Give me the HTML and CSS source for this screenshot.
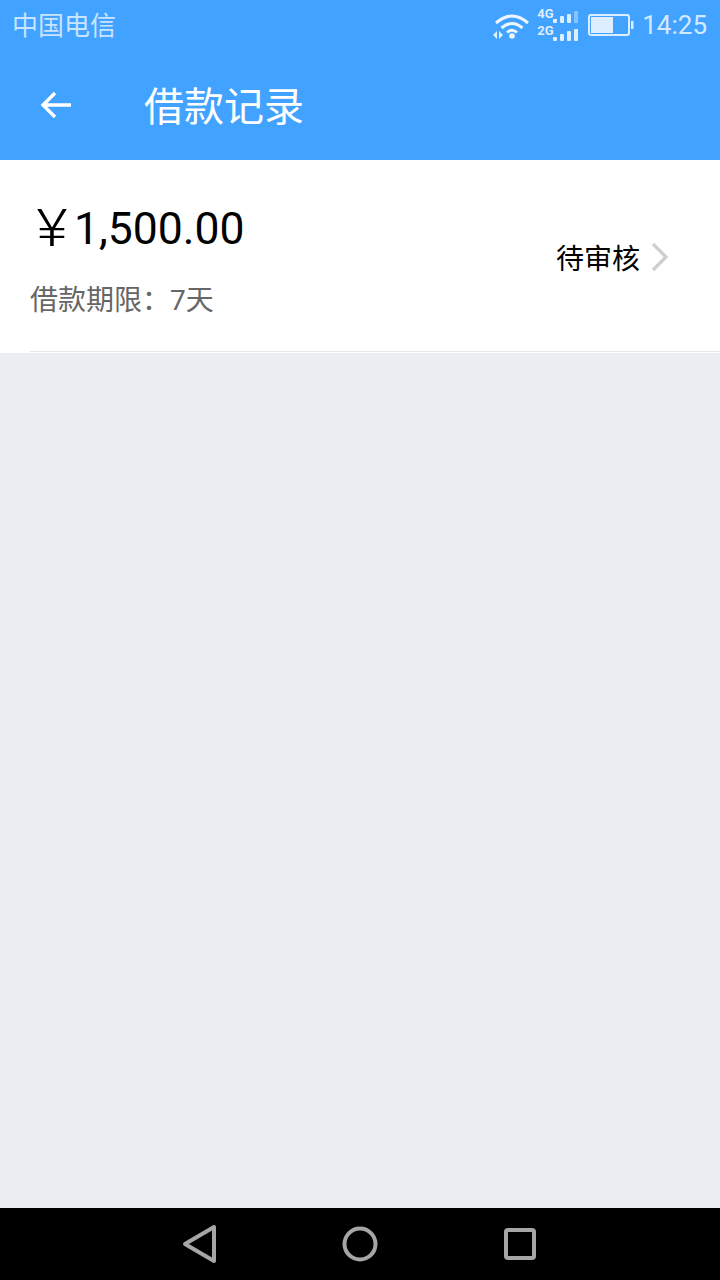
FILE: index.html
```html
<!DOCTYPE html>
<html lang="zh-CN">
<head>
  <meta charset="UTF-8">
  <title>借款记录</title>
  <link rel="stylesheet" href="styles.css">
</head>
<body>
<div class="box">
  <div class="head">
    <div class="statusBar">
      <span class="carrier">中国电信</span>
      <div class="statusRight">
        <svg class="wifi" width="38" height="28" viewBox="0 0 38 28">
          <path d="M3 12 Q19 -2 35 12" fill="none" stroke="#fff" stroke-width="3" opacity=".9"/>
          <path d="M8.500 17 Q19 8 29.500 17" fill="none" stroke="#fff" stroke-width="3" opacity=".9"/>
          <path d="M14 21.500 Q19 17 24 21.500" fill="none" stroke="#fff" stroke-width="2.800" opacity=".9"/>
          <circle cx="19" cy="25" r="2.800" fill="#fff" opacity=".9"/>
          <path d="M4 20 L0 24 L4 28 Z M6 20 L10 24 L6 28 Z" fill="#fff" opacity=".85"/>
        </svg>
        <div class="signal">
          <div class="signalRow">
            <span class="netType">4G</span>
            <svg width="25" height="12" viewBox="0 0 25 12">
              <rect x="0" y="8" width="4" height="4" rx="1" fill="#dceeff"/>
              <rect x="7" y="5" width="4" height="7" rx="1" fill="#dceeff"/>
              <rect x="14" y="3" width="4" height="9" rx="1" fill="#dceeff"/>
              <rect x="21" y="0" width="4" height="12" rx="1" fill="#dceeff" opacity=".45"/>
            </svg>
          </div>
          <div class="signalRow">
            <span class="netType netLow">2G</span>
            <svg width="25" height="12" viewBox="0 0 25 12">
              <rect x="0" y="8" width="4" height="4" rx="1" fill="#dceeff"/>
              <rect x="7" y="5" width="4" height="7" rx="1" fill="#dceeff"/>
              <rect x="14" y="2" width="4" height="10" rx="1" fill="#dceeff"/>
              <rect x="21" y="0" width="4" height="12" rx="1" fill="#dceeff"/>
            </svg>
          </div>
        </div>
        <svg class="battery" width="46" height="24" viewBox="0 0 46 24">
          <rect x="1" y="2" width="40" height="20" rx="2" fill="none" stroke="#dceeff" stroke-width="2"/>
          <rect x="3" y="4" width="22" height="16" fill="#dceeff"/>
          <rect x="43" y="8" width="2.500" height="8" fill="#dceeff"/>
        </svg>
        <span class="time">14:25</span>
      </div>
    </div>
    <div class="titleBar">
      <svg class="backIcon" width="36" height="36" viewBox="0 0 36 36">
        <path d="M33 18 H5 M17 6 L5 18 L17 30" fill="none" stroke="#fff" stroke-width="3.400"/>
      </svg>
      <h1>借款记录</h1>
    </div>
  </div>
  <div class="center">
    <div class="record">
      <div class="recordInfo">
        <p class="money"><span class="yen">¥</span>1,500.00</p>
        <p class="term">借款期限：7天</p>
      </div>
      <div class="recordState">
        <span>待审核</span>
        <svg width="18" height="30" viewBox="0 0 18 30">
          <path d="M2 2 L15 15 L2 28" fill="none" stroke="#cfcfcf" stroke-width="3.400"/>
        </svg>
      </div>
    </div>
  </div>
  <div class="navBar">
    <svg width="36" height="40" viewBox="0 0 36 40">
      <path d="M32 3 V37 L3 20 Z" fill="none" stroke="#a6a6a6" stroke-width="4" stroke-linejoin="round"/>
    </svg>
    <svg width="36" height="36" viewBox="0 0 36 36">
      <circle cx="18" cy="18" r="15.500" fill="none" stroke="#a6a6a6" stroke-width="4"/>
    </svg>
    <svg width="34" height="34" viewBox="0 0 34 34">
      <rect x="3" y="3" width="28" height="28" rx="2" fill="none" stroke="#a6a6a6" stroke-width="4"/>
    </svg>
  </div>
</div>
</body>
</html>
```
FILE: styles.css
```css
*{
  margin: 0;
  padding: 0;
  box-sizing: border-box;
}
html,body{
  width: 100%;
  height: 100%;
  background-color: #ecedf2;
  font-family: "Roboto", "Noto Sans CJK SC", sans-serif;
}
.box{
  width: 720px;
  height: 1280px;
  display: flex;
  flex-direction: column;
}
/*顶部*/
.head{
  height: 160px;
  background-color: #42a2ff;
}
.statusBar{
  height: 50px;
  display: flex;
  justify-content: space-between;
  align-items: center;
  padding: 0 13px 0 12px;
}
.carrier{
  font-size: 26px;
  color: #c9e4ff;
  margin-top: -4px;
}
.statusRight{
  display: flex;
  align-items: center;
}
.wifi{
  margin-right: 6px;
}
.signal{
  display: flex;
  flex-direction: column;
  gap: 4px;
  margin-right: 10px;
}
.signalRow{
  display: flex;
  align-items: flex-end;
  height: 14px;
}
.netType{
  font-size: 13px;
  font-weight: 700;
  color: #dceeff;
  width: 16px;
  line-height: 14px;
  align-self: flex-start;
  margin-top: -2px;
}
.netLow{
  margin-top: -3px;
}
.battery{
  margin-right: 8px;
}
.time{
  font-size: 26px;
  color: #d3e9ff;
}
.titleBar{
  height: 110px;
  display: flex;
  align-items: center;
  padding-left: 38px;
}
.backIcon{
  margin-right: 70px;
}
h1{
  font-size: 40px;
  font-weight: 400;
  color: #fff;
  line-height: 110px;
  margin-top: 5px;
}
/*记录*/
.center{
  flex: 1;
}
.record{
  height: 193px;
  background-color: #fff;
  padding-left: 30px;
  position: relative;
  display: flex;
  justify-content: space-between;
  align-items: center;
}
.record::after{
  content: "";
  position: absolute;
  left: 30px;
  right: 0;
  bottom: 1px;
  height: 1px;
  background-color: #e6e6e6;
}
.money{
  font-size: 44.500px;
  color: #000;
  line-height: 60px;
  height: 60px;
  margin-top: 7px;
  display: flex;
  align-items: center;
}
.yen{
  font-size: 51px;
  font-weight: 300;
  width: 44px;
  text-align: center;
  line-height: 60px;
  display: inline-block;
  transform: scaleX(1.18);
}
.term{
  font-size: 28px;
  color: #666;
  line-height: 40px;
  margin-top: 22px;
}
.recordState{
  display: flex;
  align-items: center;
  padding-right: 51px;
  font-size: 28px;
  color: #000;
  margin-top: 1px;
}
.recordState svg{
  margin-left: 11px;
}
/*底部导航*/
.navBar{
  height: 72px;
  background-color: #000;
  display: flex;
  align-items: center;
  justify-content: center;
  gap: 124.500px;
  padding-right: 2px;
}
```
